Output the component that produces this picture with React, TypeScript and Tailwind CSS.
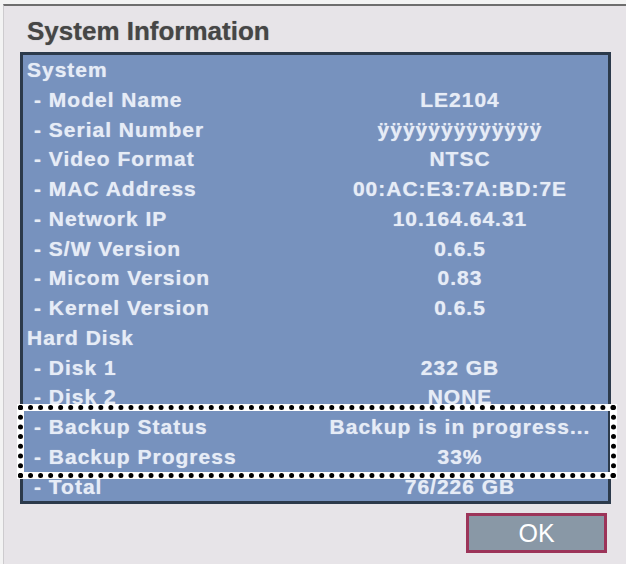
import React from 'react';

type Row = { label: string; value?: string; header?: boolean };

const rows: Row[] = [
  { label: 'System', header: true },
  { label: '- Model Name', value: 'LE2104' },
  { label: '- Serial Number', value: 'ÿÿÿÿÿÿÿÿÿÿÿÿÿ' },
  { label: '- Video Format', value: 'NTSC' },
  { label: '- MAC Address', value: '00:AC:E3:7A:BD:7E' },
  { label: '- Network IP', value: '10.164.64.31' },
  { label: '- S/W Version', value: '0.6.5' },
  { label: '- Micom Version', value: '0.83' },
  { label: '- Kernel Version', value: '0.6.5' },
  { label: 'Hard Disk', header: true },
  { label: '- Disk 1', value: '232 GB' },
  { label: '- Disk 2', value: 'NONE' },
  { label: '- Backup Status', value: 'Backup is in progress...' },
  { label: '- Backup Progress', value: '33%' },
  { label: '- Total', value: '76/226 GB' },
];

const InfoRow: React.FC<{ row: Row }> = ({ row }) => (
  <div className="grid grid-cols-[289px_1fr] h-[29.75px] leading-[29.75px] whitespace-nowrap">
    <span className={row.header ? 'pl-[4px]' : 'pl-[11px]'}>{row.label}</span>
    <span className="text-center">{row.value}</span>
  </div>
);

export default function App() {
  return (
    <div
      className="w-[626px] h-[564px] bg-[#f3f3f3] pt-[4px] pl-[3px] flex"
      style={{ fontFamily: '"Liberation Sans", Arial, sans-serif' }}
    >
      {/* dialog */}
      <div className="relative flex-1 flex flex-col bg-[#e7e4e8] border-t-2 border-t-[#6e6e6e] border-l border-l-[#cdcbce]">
        <div className="h-[46px] pt-[5px] pl-[23px] text-[26px] leading-[41px] font-bold text-[#464646] [text-shadow:0_0_1px_rgba(0,0,0,0.4)]">
          System Information
        </div>

        {/* info panel */}
        <div className="ml-[16px] w-[591px] h-[452px] overflow-hidden border-[3px] border-[#2c3a4b] bg-[#7792be] text-[21px] font-bold tracking-[1px] text-[#e6ecf6] [text-shadow:0_0_1px_rgba(255,255,255,0.6)]">
          {rows.map((r) => (
            <InfoRow key={r.label} row={r} />
          ))}
        </div>

        <div className="flex justify-end pr-[19px] mt-[9px]">
          <button
            type="button"
            className="w-[141px] h-[40px] border-[3px] border-[#9c3459] bg-[#8998a6] text-white text-[25px] leading-[34px]"
          >
            OK
          </button>
        </div>

        {/* dotted highlight over backup rows */}
        <div className="absolute left-[13px] top-[398px] w-[600px] h-[75px] border-[7px] border-white">
          <div className="absolute -inset-[6px] border-[5px] border-dotted border-black" />
        </div>
      </div>
    </div>
  );
}
